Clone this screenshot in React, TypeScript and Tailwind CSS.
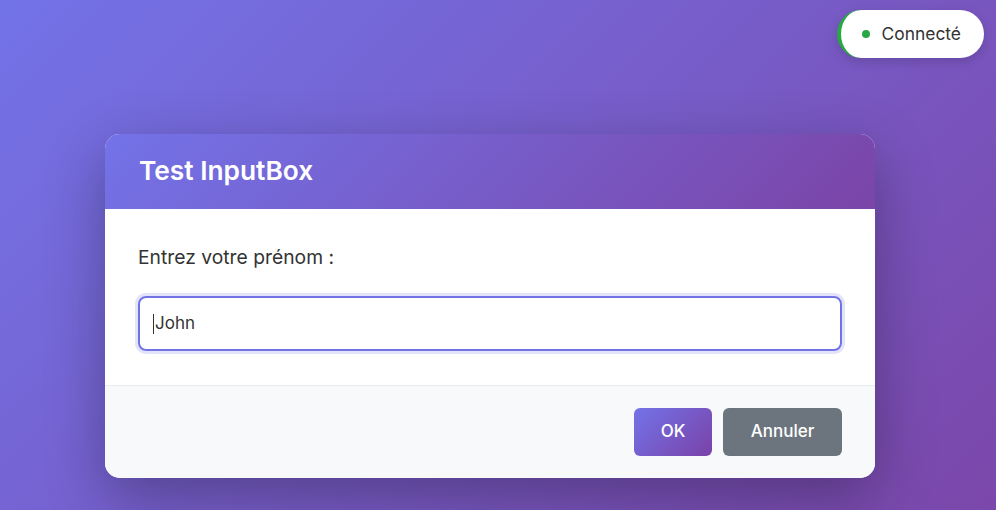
import React from "react";

export default function App() {
  return (
    <div
      className="relative w-[996px] h-[510px] overflow-hidden bg-[linear-gradient(135deg,#7373e8_0%,#7b47aa_100%)]"
      style={{ fontFamily: "Inter, 'Noto Sans', sans-serif" }}
    >
      <div className="absolute top-[10px] right-[12px] h-[48px] flex items-center gap-[12px] bg-white rounded-full border-l-[4px] border-[#28a745] pl-[21px] pr-[23px] shadow-[0_4px_12px_rgba(0,0,0,0.15)]">
        <span className="w-[8px] h-[8px] rounded-full bg-[#28a745]" />
        <span className="text-[17.4px] text-[#333]">Connecté</span>
      </div>

      <div className="pt-[134px] pl-[105px]">
        <div className="w-[770px] rounded-[15px] overflow-hidden bg-white shadow-[0_20px_60px_rgba(0,0,0,0.3)]">
          <div className="h-[75px] flex items-center px-[34px] bg-[linear-gradient(135deg,#7373e8_0%,#7b45a8_100%)]">
            <h2 className="text-[26.3px] font-semibold text-white leading-none">Test InputBox</h2>
          </div>
          <div className="pt-[34px] pb-[34px] px-[33px]">
            <div className="text-[19.3px] leading-[28px] text-[#333] mb-[25px]">Entrez votre prénom :</div>
            <div className="h-[55px] rounded-[8px] border-2 border-[#7272e4] shadow-[0_0_0_3px_rgba(115,114,228,0.2)] flex items-center pl-[13px] text-[17px] text-[#333]">
              <span className="w-px h-[20px] bg-[#333] mr-[1px]" />
              John
            </div>
          </div>
          <div className="border-t border-[#e9ecef] bg-[#f8f9fa] pt-[22px] pb-[22px] px-[33px] flex justify-end gap-[11px]">
            <button className="h-[48px] w-[78px] rounded-[6px] text-white text-[17px] font-medium bg-[linear-gradient(135deg,#7373e8_0%,#7a42a8_100%)]">
              OK
            </button>
            <button className="h-[48px] w-[119px] rounded-[6px] text-white text-[17px] font-medium bg-[#6c757d]">
              Annuler
            </button>
          </div>
        </div>
      </div>
    </div>
  );
}
